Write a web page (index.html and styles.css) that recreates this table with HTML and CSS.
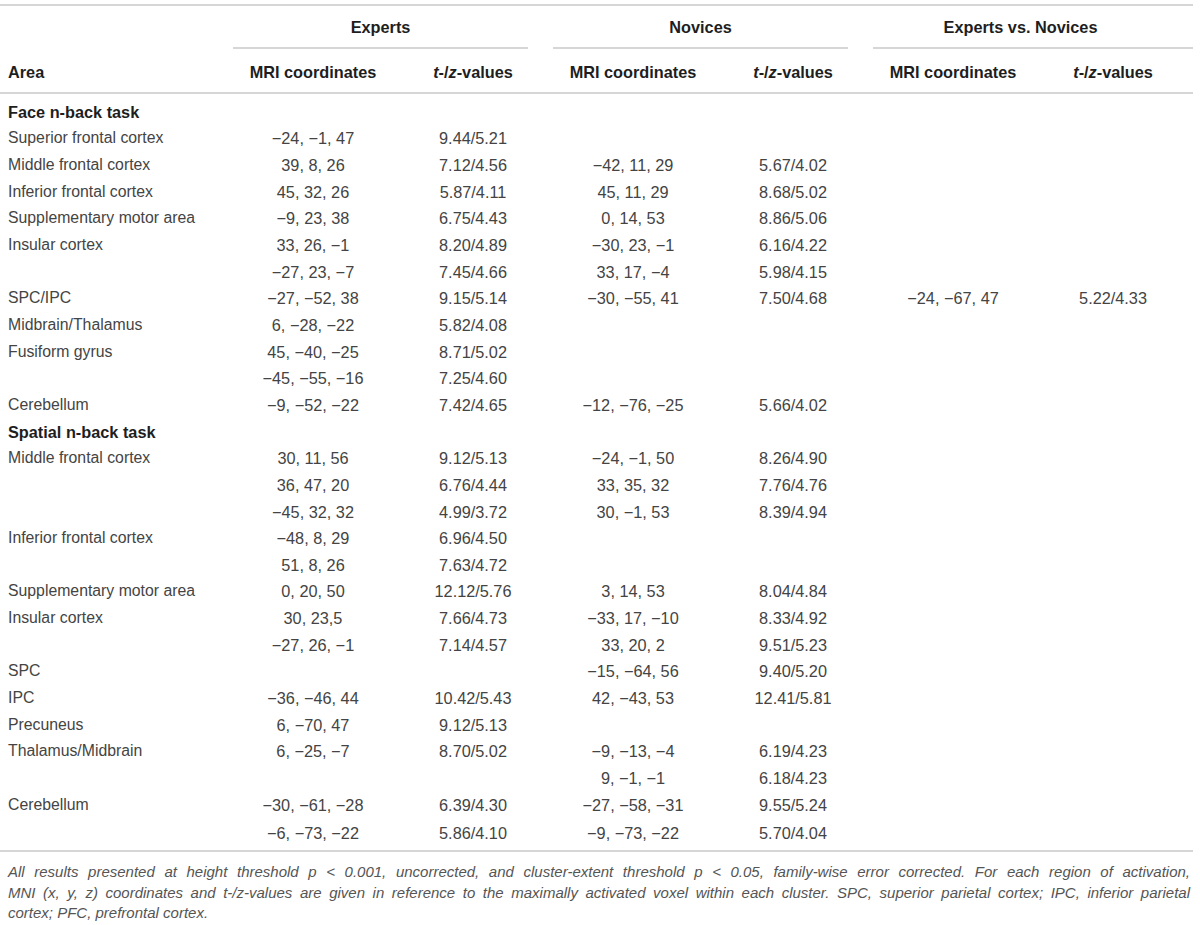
FILE: index.html
```html
<!DOCTYPE html>
<html>
<head>
<meta charset="utf-8">
<link rel="stylesheet" href="styles.css">
</head>
<body>
<div class="wrap">
<table class="results">
  <colgroup>
    <col class="c-area"><col class="c-num"><col class="c-num"><col class="c-num"><col class="c-num"><col class="c-num"><col class="c-num">
  </colgroup>
  <thead>
    <tr class="grp-row">
      <th class="blank"></th>
      <th colspan="2" class="grp"><div class="grp-inner">Experts</div></th>
      <th colspan="2" class="grp"><div class="grp-inner">Novices</div></th>
      <th colspan="2" class="grp"><div class="grp-inner last">Experts vs. Novices</div></th>
    </tr>
    <tr class="col-row">
      <th class="area">Area</th>
      <th>MRI coordinates</th><th><i>t</i>-/<i>z</i>-values</th>
      <th>MRI coordinates</th><th><i>t</i>-/<i>z</i>-values</th>
      <th>MRI coordinates</th><th><i>t</i>-/<i>z</i>-values</th>
    </tr>
  </thead>
  <tbody>
    <tr class="sec first"><td class="area" colspan="7">Face n-back task</td></tr>
    <tr><td class="area">Superior frontal cortex</td><td>−24, −1, 47</td><td>9.44/5.21</td><td></td><td></td><td></td><td></td></tr>
    <tr><td class="area">Middle frontal cortex</td><td>39, 8, 26</td><td>7.12/4.56</td><td>−42, 11, 29</td><td>5.67/4.02</td><td></td><td></td></tr>
    <tr><td class="area">Inferior frontal cortex</td><td>45, 32, 26</td><td>5.87/4.11</td><td>45, 11, 29</td><td>8.68/5.02</td><td></td><td></td></tr>
    <tr><td class="area">Supplementary motor area</td><td>−9, 23, 38</td><td>6.75/4.43</td><td>0, 14, 53</td><td>8.86/5.06</td><td></td><td></td></tr>
    <tr><td class="area">Insular cortex</td><td>33, 26, −1</td><td>8.20/4.89</td><td>−30, 23, −1</td><td>6.16/4.22</td><td></td><td></td></tr>
    <tr><td class="area"></td><td>−27, 23, −7</td><td>7.45/4.66</td><td>33, 17, −4</td><td>5.98/4.15</td><td></td><td></td></tr>
    <tr><td class="area">SPC/IPC</td><td>−27, −52, 38</td><td>9.15/5.14</td><td>−30, −55, 41</td><td>7.50/4.68</td><td>−24, −67, 47</td><td>5.22/4.33</td></tr>
    <tr><td class="area">Midbrain/Thalamus</td><td>6, −28, −22</td><td>5.82/4.08</td><td></td><td></td><td></td><td></td></tr>
    <tr><td class="area">Fusiform gyrus</td><td>45, −40, −25</td><td>8.71/5.02</td><td></td><td></td><td></td><td></td></tr>
    <tr><td class="area"></td><td>−45, −55, −16</td><td>7.25/4.60</td><td></td><td></td><td></td><td></td></tr>
    <tr><td class="area">Cerebellum</td><td>−9, −52, −22</td><td>7.42/4.65</td><td>−12, −76, −25</td><td>5.66/4.02</td><td></td><td></td></tr>
    <tr class="sec"><td class="area" colspan="7">Spatial n-back task</td></tr>
    <tr><td class="area">Middle frontal cortex</td><td>30, 11, 56</td><td>9.12/5.13</td><td>−24, −1, 50</td><td>8.26/4.90</td><td></td><td></td></tr>
    <tr><td class="area"></td><td>36, 47, 20</td><td>6.76/4.44</td><td>33, 35, 32</td><td>7.76/4.76</td><td></td><td></td></tr>
    <tr><td class="area"></td><td>−45, 32, 32</td><td>4.99/3.72</td><td>30, −1, 53</td><td>8.39/4.94</td><td></td><td></td></tr>
    <tr><td class="area">Inferior frontal cortex</td><td>−48, 8, 29</td><td>6.96/4.50</td><td></td><td></td><td></td><td></td></tr>
    <tr><td class="area"></td><td>51, 8, 26</td><td>7.63/4.72</td><td></td><td></td><td></td><td></td></tr>
    <tr><td class="area">Supplementary motor area</td><td>0, 20, 50</td><td>12.12/5.76</td><td>3, 14, 53</td><td>8.04/4.84</td><td></td><td></td></tr>
    <tr><td class="area">Insular cortex</td><td>30, 23,5</td><td>7.66/4.73</td><td>−33, 17, −10</td><td>8.33/4.92</td><td></td><td></td></tr>
    <tr><td class="area"></td><td>−27, 26, −1</td><td>7.14/4.57</td><td>33, 20, 2</td><td>9.51/5.23</td><td></td><td></td></tr>
    <tr><td class="area">SPC</td><td></td><td></td><td>−15, −64, 56</td><td>9.40/5.20</td><td></td><td></td></tr>
    <tr><td class="area">IPC</td><td>−36, −46, 44</td><td>10.42/5.43</td><td>42, −43, 53</td><td>12.41/5.81</td><td></td><td></td></tr>
    <tr><td class="area">Precuneus</td><td>6, −70, 47</td><td>9.12/5.13</td><td></td><td></td><td></td><td></td></tr>
    <tr><td class="area">Thalamus/Midbrain</td><td>6, −25, −7</td><td>8.70/5.02</td><td>−9, −13, −4</td><td>6.19/4.23</td><td></td><td></td></tr>
    <tr><td class="area"></td><td></td><td></td><td>9, −1, −1</td><td>6.18/4.23</td><td></td><td></td></tr>
    <tr><td class="area">Cerebellum</td><td>−30, −61, −28</td><td>6.39/4.30</td><td>−27, −58, −31</td><td>9.55/5.24</td><td></td><td></td></tr>
    <tr class="last-row"><td class="area"></td><td>−6, −73, −22</td><td>5.86/4.10</td><td>−9, −73, −22</td><td>5.70/4.04</td><td></td><td></td></tr>
  </tbody>
</table>
<p class="note"><span class="ln">All results presented at height threshold p &lt; 0.001, uncorrected, and cluster-extent threshold p &lt; 0.05, family-wise error corrected. For each region of activation,</span><span class="ln">MNI (x, y, z) coordinates and t-/z-values are given in reference to the maximally activated voxel within each cluster. SPC, superior parietal cortex; IPC, inferior parietal</span><span class="ln end">cortex; PFC, prefrontal cortex.</span></p>
</div>
</body>
</html>
```
FILE: styles.css
```css
html, body {
  margin: 0;
  padding: 0;
  background: #ffffff;
}
body {
  font-family: "Liberation Sans", Arial, Helvetica, sans-serif;
  color: #444444;
}
.wrap {
  width: 1193px;
  padding-top: 4px;
}
.results {
  width: 1193px;
  border-collapse: collapse;
  table-layout: fixed;
  font-size: 16px;
  border-top: 2px solid #d6d6d6;
  border-bottom: 2px solid #d6d6d6;
}
.c-area { width: 233px; }
.c-num { width: 160px; }

.results th {
  font-weight: bold;
  font-size: 16.3px;
  color: #1e1e1e;
  text-align: center;
  padding: 0;
}
.grp-row th { height: 43px; vertical-align: top; }
.grp-inner {
  margin-right: 25px;
  height: 41px;
  line-height: 42px;
  border-bottom: 2px solid #d6d6d6;
}
.grp-inner.last {
  margin-right: 0;
  padding-right: 25px;
}
.col-row th {
  height: 40px;
  padding-top: 3px;
  border-bottom: 2px solid #d6d6d6;
}
.col-row th.area { text-align: left; padding-left: 8px; }
.results i { font-style: italic; }

.results td {
  height: 26.67px;
  padding: 0;
  text-align: center;
  white-space: nowrap;
  vertical-align: middle;
  line-height: 18px;
  font-size: 16.3px;
}
.results td.area {
  text-align: left;
  padding-left: 8px;
  font-size: 15.8px;
}
.results .sec td {
  font-weight: bold;
  font-size: 16.3px;
  color: #1e1e1e;
}
.sec.first td {
  height: 32px;
  padding-top: 5px;
  box-sizing: border-box;
}
.last-row td { height: 29px; padding-bottom: 3px; }

.note {
  margin: 10px 0 0 0;
  padding: 0 3px 0 8px;
  font-style: italic;
  font-size: 15px;
  line-height: 20.5px;
  color: #555555;
}
.note .ln {
  display: block;
  white-space: nowrap;
  text-align: justify;
  text-align-last: justify;
}
.note .ln.end {
  text-align-last: left;
}
```
